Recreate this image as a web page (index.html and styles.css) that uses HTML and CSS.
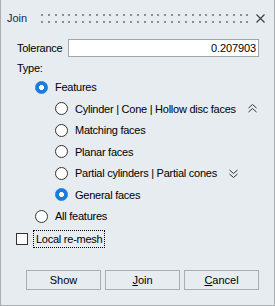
FILE: index.html
```html
<!DOCTYPE html>
<html lang="en">
<head>
    <meta charset="UTF-8">
    <title>Join</title>
    <link rel="stylesheet" href="styles.css">
</head>
<body>
    <div class="window">
        <div class="titlebar">
            <span class="title">Join</span>
            <span class="grip"></span>
            <svg class="close" width="9" height="9" viewBox="0 0 9 9">
                <path d="M0.5 0.5 L8.5 8.5 M8.5 0.5 L0.5 8.5" stroke="#3c3c3c" stroke-width="1.1" fill="none"/>
            </svg>
        </div>

        <div class="tolerance">
            <label for="tol">Tolerance</label>
            <input type="text" id="tol" value="0.207903">
        </div>

        <div class="type-label">Type:</div>

        <div class="options">
            <div class="opt"><span class="radio checked"></span>Features</div>
            <div class="opt sub"><span class="radio"></span>Cylinder | Cone | Hollow disc faces
                <svg class="chev" width="9" height="9" viewBox="0 0 9 9">
                    <path d="M0.5 4 L4.5 0.5 L8.5 4 M0.5 8 L4.5 4.5 L8.5 8" stroke="#333" fill="none"/>
                </svg>
            </div>
            <div class="opt sub"><span class="radio"></span>Matching faces</div>
            <div class="opt sub"><span class="radio"></span>Planar faces</div>
            <div class="opt sub"><span class="radio"></span>Partial cylinders | Partial cones
                <svg class="chev" width="9" height="9" viewBox="0 0 9 9">
                    <path d="M0.5 1 L4.5 4.5 L8.5 1 M0.5 5 L4.5 8.5 L8.5 5" stroke="#333" fill="none"/>
                </svg>
            </div>
            <div class="opt sub"><span class="radio checked"></span>General faces</div>
            <div class="opt"><span class="radio"></span>All features</div>
        </div>

        <div class="check-row">
            <span class="checkbox"></span>
            <span class="focus">Local re-mesh</span>
        </div>

        <div class="buttons">
            <button>Show</button>
            <button><u>J</u>oin</button>
            <button><u>C</u>ancel</button>
        </div>
    </div>
</body>
</html>
```

FILE: styles.css
```css
body {
    margin: 0;
    font-family: "Liberation Sans", Arial, sans-serif;
    font-size: 11px;
    letter-spacing: -0.25px;
    color: #000;
}

.window {
    width: 275px;
    height: 306px;
    box-sizing: border-box;
    background: #e6ecf0;
    border: 1px solid #a9aeb3;
    border-top: none;
    display: flex;
    flex-direction: column;
}

.titlebar {
    height: 36px;
    display: flex;
    align-items: center;
    padding: 0 0 0 6px;
}

.title {
    flex: none;
    color: #1c2744;
    width: 34px;
    letter-spacing: 0;
}

.grip {
    flex: none;
    width: 207px;
    height: 9px;
    margin-top: 1px;
    background: repeating-linear-gradient(to right, #8a8d90 0 2px, transparent 2px 6.85px);
    -webkit-mask: repeating-linear-gradient(to bottom, #000 0 2px, transparent 2px 7px);
    mask: repeating-linear-gradient(to bottom, #000 0 2px, transparent 2px 7px);
}

.close {
    margin-left: 8px;
}

.tolerance {
    display: flex;
    align-items: center;
    margin-top: 3px;
    padding: 0 15px 0 16px;
    height: 18px;
}

.tolerance label {
    width: 51px;
}

.tolerance input {
    flex: 1;
    height: 18px;
    box-sizing: border-box;
    border: 1px solid #a3a6a8;
    background: #fff;
    text-align: right;
    font-family: inherit;
    font-size: 11px;
    letter-spacing: -0.1px;
    padding: 0 2px;
    margin: 0;
}

.type-label {
    margin: 4px 0 0 16px;
    height: 15.5px;
    line-height: 15px;
}

.opt {
    display: flex;
    align-items: center;
    height: 21.5px;
    padding-left: 34px;
    white-space: nowrap;
}

.opt.sub {
    padding-left: 54px;
}

.radio {
    width: 13px;
    height: 13px;
    box-sizing: border-box;
    border: 1px solid #333;
    border-radius: 50%;
    background: #fff;
    margin-right: 7px;
    flex-shrink: 0;
}

.radio.checked {
    border-color: #1a7ce0;
    background: radial-gradient(circle, #fff 2.2px, #1a7ce0 2.8px);
}

.chev {
    margin-left: 12px;
}

.check-row {
    display: flex;
    align-items: center;
    height: 20px;
    margin-top: 2px;
    padding-left: 15px;
}

.checkbox {
    width: 12px;
    height: 12px;
    box-sizing: border-box;
    border: 1px solid #333;
    background: #fff;
    margin-right: 5px;
}

.focus {
    border: 1px dotted #000;
    padding: 2px;
}

.buttons {
    margin-top: auto;
    display: flex;
    justify-content: flex-end;
    gap: 4px;
    padding: 0 15px 15px 0;
}

.buttons button {
    width: 75px;
    height: 20px;
    background: #e6ecf0;
    border: 1px solid #adadad;
    font-family: inherit;
    font-size: 11px;
    color: #000;
    padding: 0;
}
```
